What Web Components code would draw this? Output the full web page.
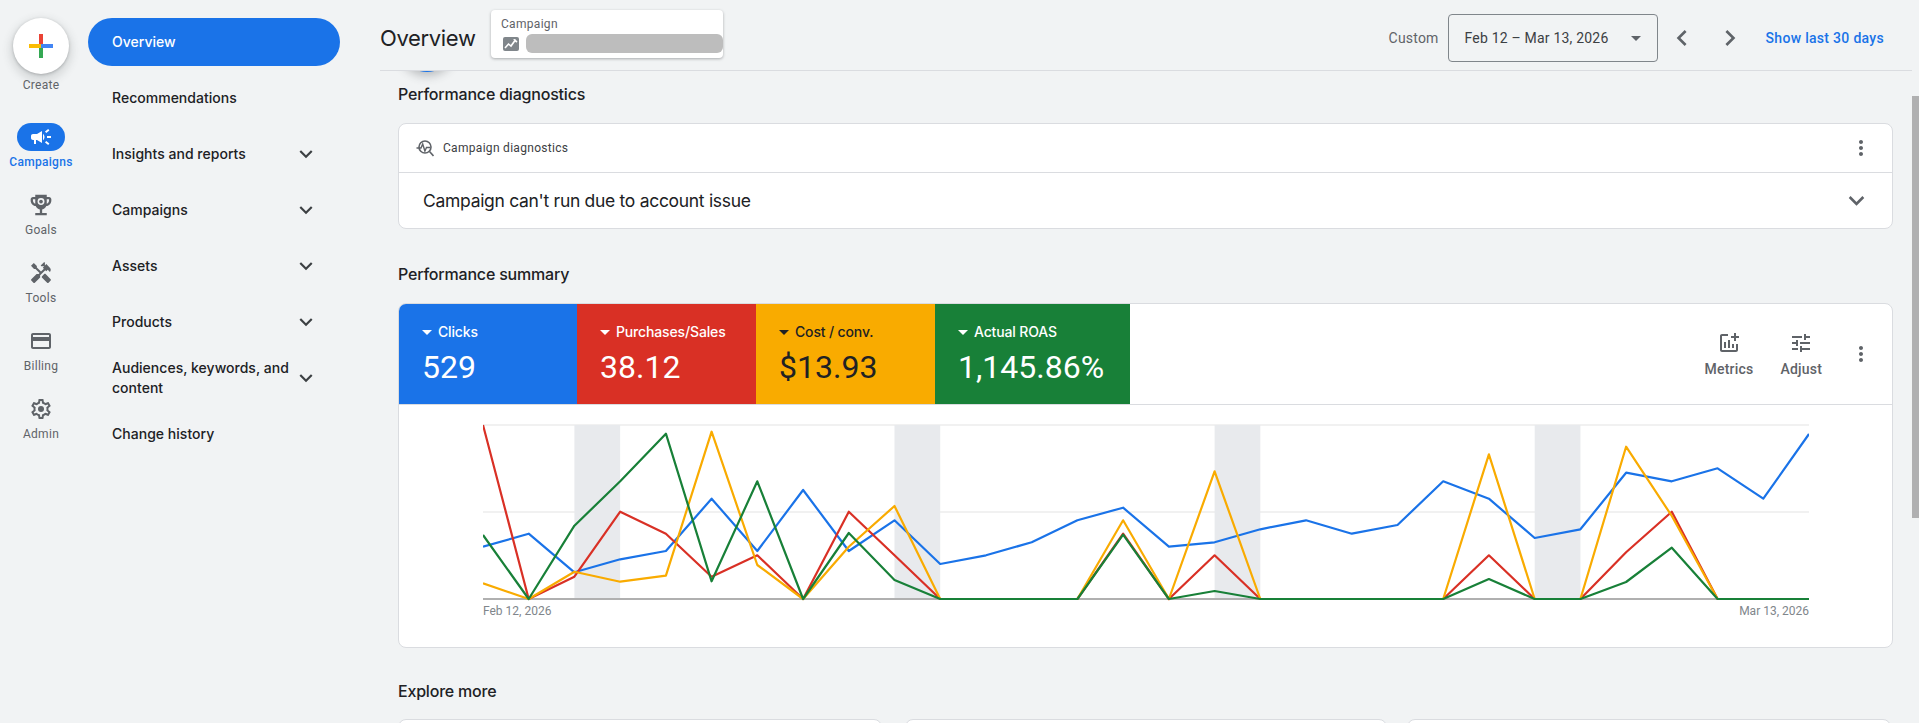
<!DOCTYPE html>
<html lang="en">
<head>
<meta charset="UTF-8">
<title>Overview</title>
<style>
    html, body { margin: 0; height: 100%; overflow: hidden; background: #f1f3f4; }
    body { font-family: Roboto, "Liberation Sans", sans-serif; color: #202124; }
    #app { display: flex; height: 723px; }
</style>
</head>
<body>
<div id="app">
    <ads-rail>
        <create-button></create-button>
        <rail-item icon="campaign" active>Campaigns</rail-item>
        <rail-item icon="goals">Goals</rail-item>
        <rail-item icon="tools">Tools</rail-item>
        <rail-item icon="billing">Billing</rail-item>
        <rail-item icon="admin">Admin</rail-item>
    </ads-rail>
    <ads-nav>
        <nav-item active>Overview</nav-item>
        <nav-item>Recommendations</nav-item>
        <nav-item expand>Insights and reports</nav-item>
        <nav-item expand>Campaigns</nav-item>
        <nav-item expand>Assets</nav-item>
        <nav-item expand>Products</nav-item>
        <nav-item expand>Audiences, keywords, and content</nav-item>
        <nav-item>Change history</nav-item>
    </ads-nav>
    <ads-main>
        <page-header></page-header>
        <page-content>
            <section-title style="margin-top:11px">Performance diagnostics</section-title>
            <diag-card style="margin-top:17px"></diag-card>
            <section-title style="margin-top:33px">Performance summary</section-title>
            <summary-card style="margin-top:17px">
                <metric-tile label="Clicks" value="529" color="#1a73e8" style="width:178px"></metric-tile>
                <metric-tile label="Purchases/Sales" value="38.12" color="#d93025" style="width:179px"></metric-tile>
                <metric-tile label="Cost / conv." value="$13.93" color="#f9ab00" ink="#202124" style="width:179px"></metric-tile>
                <metric-tile label="Actual ROAS" value="1,145.86%" color="#188038" style="width:195px"></metric-tile>
            </summary-card>
            <section-title style="margin-top:31px">Explore more</section-title>
            <more-cards style="margin-top:16px"></more-cards>
        </page-content>
    </ads-main>
    <scroll-thumb></scroll-thumb>
</div>

<script>
    const icons = {
        campaign: '<path d="M18 11v2h4v-2h-4zm-2 6.61c.96.71 2.21 1.65 3.2 2.39.4-.53.8-1.07 1.2-1.6-.99-.74-2.24-1.68-3.2-2.4-.4.54-.8 1.08-1.2 1.61zM20.4 5.6c-.4-.53-.8-1.07-1.2-1.6-.99.74-2.24 1.68-3.2 2.4.4.53.8 1.07 1.2 1.6.96-.72 2.21-1.65 3.2-2.4zM4 9c-1.1 0-2 .9-2 2v2c0 1.1.9 2 2 2h1v4h2v-4h1l5 3V6L8 9H4zm11.5 3c0-1.33-.58-2.53-1.5-3.35v6.69c.92-.81 1.5-2.01 1.5-3.34z"/>',
        goals: '<g transform="translate(12 12) scale(1.15) translate(-12 -12)"><path d="M19 5h-2V3H7v2H5c-1.1 0-2 .9-2 2v1c0 2.55 1.92 4.63 4.39 4.94.63 1.5 1.98 2.63 3.61 2.96V19H7v2h10v-2h-4v-3.1c1.63-.33 2.98-1.46 3.61-2.96C19.08 12.63 21 10.55 21 8V7c0-1.1-.9-2-2-2zM5 8V7h2v3.82C5.84 10.4 5 9.3 5 8zm14 0c0 1.3-.84 2.4-2 2.82V7h2v1z"/><circle cx="12" cy="9" r="3" fill="#f1f3f4"/><circle cx="12" cy="9" r="1.6"/></g>',
        tools: '<path d="M21.67 18.17l-5.3-5.3h-.99l-2.54 2.54v.99l5.3 5.3c.39.39 1.02.39 1.41 0l2.12-2.12c.39-.38.39-1.02 0-1.41z"/><path d="M17.34 10.19l1.41-1.41 2.12 2.12c1.17-1.17 1.17-3.07 0-4.24l-3.54-3.54-1.41 1.41V1.71l-.7-.71-3.54 3.54.71.71h2.83l-1.41 1.41 1.06 1.06-2.89 2.89-4.13-4.13V5.06L4.83 2.04 2 4.87 5.03 7.9h1.41l4.13 4.13-.85.85H7.6l-5.3 5.3c-.39.39-.39 1.02 0 1.41l2.12 2.12c.39.39 1.02.39 1.41 0l5.3-5.3v-2.12l5.15-5.15 1.06 1.05z"/>',
        billing: '<path d="M20 4H4c-1.11 0-1.99.89-1.99 2L2 18c0 1.11.89 2 2 2h16c1.11 0 2-.89 2-2V6c0-1.11-.89-2-2-2zm0 14H4v-6h16v6zm0-10H4V6h16v2z"/>',
        admin: '<path d="M19.43 12.98c.04-.32.07-.64.07-.98 0-.34-.03-.66-.07-.98l2.11-1.65c.19-.15.24-.42.12-.64l-2-3.46c-.09-.16-.26-.25-.44-.25-.06 0-.12.01-.17.03l-2.49 1c-.52-.4-1.08-.73-1.69-.98l-.38-2.65C14.46 2.18 14.25 2 14 2h-4c-.25 0-.46.18-.49.42l-.38 2.65c-.61.25-1.17.59-1.69.98l-2.49-1c-.06-.02-.12-.03-.18-.03-.17 0-.34.09-.43.25l-2 3.46c-.13.22-.07.49.12.64l2.11 1.65c-.04.32-.07.65-.07.98 0 .33.03.66.07.98l-2.11 1.65c-.19.15-.24.42-.12.64l2 3.46c.09.16.26.25.44.25.06 0 .12-.01.17-.03l2.49-1c.52.4 1.08.73 1.69.98l.38 2.65c.03.24.24.42.49.42h4c.25 0 .46-.18.49-.42l.38-2.65c.61-.25 1.17-.59 1.69-.98l2.49 1c.06.02.12.03.18.03.17 0 .34-.09.43-.25l2-3.46c.12-.22.07-.49-.12-.64l-2.11-1.65zm-1.98-1.71c.04.31.05.52.05.73 0 .21-.02.43-.05.73l-.14 1.13.89.7 1.08.84-.7 1.21-1.27-.51-1.04-.42-.9.68c-.43.32-.84.56-1.25.73l-1.06.43-.16 1.13-.2 1.35h-1.4l-.19-1.35-.16-1.13-1.06-.43c-.43-.18-.83-.41-1.23-.71l-.91-.7-1.06.43-1.27.51-.7-1.21 1.08-.84.89-.7-.14-1.13c-.03-.31-.05-.54-.05-.74s.02-.43.05-.73l.14-1.13-.89-.7-1.08-.84.7-1.21 1.27.51 1.04.42.9-.68c.43-.32.84-.56 1.25-.73l1.06-.43.16-1.13.2-1.35h1.39l.19 1.35.16 1.13 1.06.43c.43.18.83.41 1.23.71l.91.7 1.06-.43 1.27-.51.7 1.21-1.07.85-.89.7.14 1.13z"/><circle cx="12" cy="12" r="3"/>',
        expand: '<path d="M16.59 8.59L12 13.17 7.41 8.59 6 10l6 6 6-6z"/>',
        prev: '<path d="M15.41 7.41L14 6l-6 6 6 6 1.41-1.41L10.83 12z"/>',
        next: '<path d="M10 6L8.59 7.41 13.17 12l-4.58 4.59L10 18l6-6z"/>',
        more: '<path d="M12 8c1.1 0 2-.9 2-2s-.9-2-2-2-2 .9-2 2 .9 2 2 2zm0 2c-1.1 0-2 .9-2 2s.9 2 2 2 2-.9 2-2-.9-2-2-2zm0 6c-1.1 0-2 .9-2 2s.9 2 2 2 2-.9 2-2-.9-2-2-2z"/>',
        metrics: '<path d="M22 5v2h-3v3h-2V7h-3V5h3V2h2v3h3zm-3 14H5V5h6V3H5c-1.1 0-2 .9-2 2v14c0 1.1.9 2 2 2h14c1.1 0 2-.9 2-2v-6h-2v6zm-4-6v4h2v-4h-2zm-4 4h2V9h-2v8zm-2 0v-6H7v6h2z"/>',
        adjust: '<path d="M3 17v2h6v-2H3zM3 5v2h10V5H3zm10 16v-2h8v-2h-8v-2h-2v6h2zM7 9v2H3v2h4v2h2V9H7zm14 4v-2H11v2h10zm-6-4h2V7h4V5h-4V3h-2v6z"/>'
    };
    const svg = (name, size = 24, fill = 'currentColor') =>
        `<svg width="${size}" height="${size}" viewBox="0 0 24 24" fill="${fill}" style="display:block;flex:none">${icons[name]}</svg>`;

    const sansHead = 'Inter, Roboto, sans-serif';

    class Base extends HTMLElement {
        connectedCallback() {
            if (this.shadowRoot) return;
            this.attachShadow({ mode: 'open' }).innerHTML = this.render();
        }
    }

    class AdsRail extends Base {
        render() { return `<style>
            :host { display:flex; flex-direction:column; align-items:center; width:82px; flex:none; padding-top:18px; box-sizing:border-box; }
        </style><slot></slot>`; }
    }

    class CreateButton extends Base {
        render() { return `<style>
            :host { display:flex; flex-direction:column; align-items:center; margin-bottom:28px; }
            .fab { width:56px; height:56px; border-radius:50%; background:#fff; box-shadow:0 1px 3px rgba(60,64,67,.3), 0 4px 8px 3px rgba(60,64,67,.15); }
            span { font-size:12px; line-height:20px; letter-spacing:.3px; color:#5f6368; margin-top:1px; }
        </style>
        <div class="fab"><svg width="56" height="56" viewBox="0 0 56 56">
            <rect x="26" y="16" width="4" height="12" fill="#ea4335"/>
            <rect x="26" y="28" width="4" height="12" fill="#34a853"/>
            <rect x="16" y="26" width="12" height="4" fill="#fbbc04"/>
            <rect x="28" y="26" width="12" height="4" fill="#4285f4"/>
        </svg></div>
        <span>Create</span>`; }
    }

    class RailItem extends Base {
        render() {
            const on = this.hasAttribute('active');
            return `<style>
                :host { display:flex; flex-direction:column; align-items:center; margin-bottom:19px; color:${on ? '#1a73e8' : '#5f6368'}; }
                .pill { display:flex; align-items:center; justify-content:center; width:48px; height:28px; border-radius:14px;
                    background:${on ? '#1a73e8' : 'transparent'}; color:${on ? '#fff' : '#5f6368'}; }
                .label { font-size:12px; line-height:20px; padding-top:1px; letter-spacing:.3px; font-weight:${on ? 500 : 400}; }
            </style><div class="pill">${svg(this.getAttribute('icon'))}</div><div class="label"><slot></slot></div>`;
        }
    }

    class AdsNav extends Base {
        render() { return `<style>
            :host { display:block; width:298px; flex:none; padding:14px 40px 0 6px; box-sizing:border-box; }
        </style><slot></slot>`; }
    }

    class NavItem extends Base {
        render() {
            const on = this.hasAttribute('active');
            return `<style>
                :host { display:flex; align-items:center; min-height:56px; }
                .row { flex:1; display:flex; align-items:center; box-sizing:border-box; height:48px; padding:0 21px 0 24px; border-radius:24px;
                    background:${on ? '#1a73e8' : 'transparent'}; color:${on ? '#fff' : '#202124'};
                    font:450 14px/20px ${sansHead}; letter-spacing:.02px; }
                .text { flex:1; }
                svg { color:#3c4043; margin-left:4px; }
            </style><div class="row"><div class="text"><slot></slot></div>${this.hasAttribute('expand') ? svg('expand', 26) : ''}</div>`;
        }
    }

    class AdsMain extends Base {
        render() { return `<style>
            :host { display:flex; flex-direction:column; flex:none; width:1532px; height:723px; overflow:hidden; }
        </style><slot></slot>`; }
    }

    class PageHeader extends Base {
        render() { return `<style>
            :host { display:flex; align-items:center; flex:none; height:64px; padding:6px 28px 0 0; border-bottom:1px solid #dadce0; position:relative; z-index:1; }
            h1 { margin:0; font:400 22px/28px ${sansHead}; color:#202124; letter-spacing:-.35px; width:111px; flex:none; }
            .right { margin-left:auto; display:flex; align-items:center; font-size:14px; color:#5f6368; }
            .custom { letter-spacing:.2px; margin-right:9px; }
            .range { display:flex; align-items:center; box-sizing:border-box; width:210px; height:48px; border:1px solid #80868b; border-radius:4px; padding:0 16px; color:#3c4043; letter-spacing:.2px; }
            .range i { margin-left:auto; border:5px solid transparent; border-top:5px solid #5f6368; border-bottom:0; }
            .arrow { width:48px; display:flex; justify-content:center; color:#5f6368; }
            .show { color:#1a73e8; font-weight:500; letter-spacing:.3px; margin-left:12px; white-space:nowrap; }
        </style>
        <h1>Overview</h1>
        <campaign-chip></campaign-chip>
        <div class="right">
            <span class="custom">Custom</span>
            <div class="range"><span>Feb 12 – Mar 13, 2026</span><i></i></div>
            <div class="arrow">${svg('prev', 32)}</div>
            <div class="arrow">${svg('next', 32)}</div>
            <span class="show">Show last 30 days</span>
        </div>`; }
    }

    class CampaignChip extends Base {
        render() { return `<style>
            :host { display:flex; flex-direction:column; align-self:flex-start; box-sizing:border-box; width:232px; height:48px; background:#fff; border-radius:4px;
                box-shadow:0 1px 3px rgba(60,64,67,.4); padding:6px 0 0 10px; margin-top:4px; }
            .t { font-size:12px; line-height:16px; letter-spacing:.3px; color:#5f6368; }
            .r { display:flex; align-items:center; margin-top:2px; }
            .ic { width:16px; height:14px; border-radius:2px; background:#80868b; margin-left:2px; }
            .ic svg { display:block; }
            .blur { margin-left:7px; width:197px; height:19px; background:#bdbdbd; border-radius:6px; }
        </style>
        <div class="t">Campaign</div>
        <div class="r">
            <div class="ic"><svg width="16" height="14" viewBox="0 0 16 14" fill="none" stroke="#fff" stroke-width="1.6"><path d="M2 11l3.5-4 2.5 2 4-5.5 2 1.5"/><path d="M10.5 2.6h2" stroke-width="1"/></svg></div>
            <div class="blur"></div>
        </div>`; }
    }

    class PageContent extends Base {
        render() { return `<style>
            :host { display:block; position:relative; flex:1; overflow:hidden; padding:0 19px 0 18px; }
            .peek { position:absolute; left:19px; top:-55px; width:56px; height:56px; border-radius:50%; background:#1a73e8; box-shadow:0 2px 10px 2px rgba(60,64,67,.3); }
        </style><div class="peek"></div><slot></slot>`; }
    }

    class SectionTitle extends Base {
        render() { return `<style>
            :host { display:block; font:500 16px/24px ${sansHead}; letter-spacing:-.2px; color:#202124; }
        </style><slot></slot>`; }
    }

    class DiagCard extends Base {
        render() { return `<style>
            :host { display:block; background:#fff; border:1px solid #dadce0; border-radius:8px; }
            .top { display:flex; align-items:center; height:48px; border-bottom:1px solid #dadce0; padding:0 19px 0 17px; font-size:12px; letter-spacing:.3px; color:#3c4043; }
            .top span { margin-left:9px; }
            .top .dots { margin-left:auto; color:#5f6368; }
            .bot { display:flex; align-items:center; height:55px; padding:0 20px 0 24px; font:400 17.5px/24px ${sansHead}; letter-spacing:-.3px; color:#202124; }
            .bot svg { margin-left:auto; color:#5f6368; }
        </style>
        <div class="top">
            <svg width="18" height="20" viewBox="0 0 18 20" fill="none" stroke="#5f6368" stroke-width="1.6" style="flex:none">
                <circle cx="9" cy="9" r="6"/><path d="M13.5 13.5l4 4.5"/><path d="M0.5 10h4.5l1.7-4 2.2 7 1.6-3.5H14" stroke-width="1.4"/>
            </svg>
            <span>Campaign diagnostics</span>
            <div class="dots">${svg('more')}</div>
        </div>
        <div class="bot">Campaign can't run due to account issue${svg('expand', 31)}</div>`; }
    }

    class SummaryCard extends Base {
        render() { return `<style>
            :host { display:block; background:#fff; border:1px solid #dadce0; border-radius:8px; overflow:hidden; }
            .top { display:flex; height:100px; border-bottom:1px solid #dadce0; }
            .tools { margin-left:auto; display:flex; align-items:center; padding-right:19px; color:#5f6368; }
            .tool { display:flex; flex-direction:column; align-items:center; font:500 14px/20px Roboto, sans-serif; letter-spacing:.2px; margin-right:27px; padding-top:2px; }
            .tool svg { margin-bottom:4px; }
        </style>
        <div class="top">
            <slot></slot>
            <div class="tools">
                <div class="tool">${svg('metrics')}Metrics</div>
                <div class="tool">${svg('adjust')}Adjust</div>
                ${svg('more')}
            </div>
        </div>
        <perf-chart></perf-chart>`; }
    }

    class MetricTile extends Base {
        render() {
            const ink = this.getAttribute('ink') || '#fff';
            return `<style>
                :host { display:block; flex:none; box-sizing:border-box; background:${this.getAttribute('color')}; color:${ink}; padding:18px 0 0 24px; }
                .l { display:flex; align-items:center; font:500 14px/20px ${sansHead}; letter-spacing:-.15px; white-space:nowrap; }
                i { border:5px solid transparent; border-top:5px solid ${ink}; border-bottom:0; margin:0 6px 0 -1px; }
                .v { font:400 32px/40px Roboto, sans-serif; margin-top:5px; margin-left:-1px; white-space:nowrap; }
            </style><div class="l"><i></i>${this.getAttribute('label')}</div><div class="v">${this.getAttribute('value')}</div>`;
        }
    }

    // values are read off the reference: 45 is the top gridline, 567 the baseline
    const series = [
        ['#1a73e8', [410,371,487,448,423,266,423,240,423,331,462,436,397,331,293,410,397,358,331,371,345,214,266,384,358,188,214,175,266,72]],
        ['#d93025', [45,567,500,305,371,500,436,567,305,436,567,567,567,567,371,567,436,567,567,567,567,567,436,567,567,427,305,567,567,567]],
        ['#f9ab00', [520,567,485,515,497,65,465,567,410,288,567,567,567,567,331,567,184,567,567,567,567,567,133,567,567,110,318,567,567,567]],
        ['#188038', [375,567,347,214,71,514,214,567,369,510,567,567,567,567,374,567,543,567,567,567,567,567,507,567,567,516,413,567,567,567]]
    ];

    class PerfChart extends Base {
        render() {
            const step = 1326 / 29;
            const x = i => +(i * step).toFixed(1);
            const y = v => +(v / 3 - 11).toFixed(1);
            const bands = [2, 9, 16, 23].map(i => `<rect x="${x(i)}" y="4" width="${step}" height="174" fill="#e8eaed"/>`).join('');
            const lines = series.map(([c, vals]) =>
                `<polyline fill="none" stroke="${c}" stroke-width="2.2" stroke-linejoin="round" points="${vals.map((v, i) => x(i) + ',' + y(v)).join(' ')}"/>`).join('');
            return `<style>
                :host { display:block; padding:16px 0 28px 84px; }
                svg { display:block; }
                .dates { display:flex; justify-content:space-between; width:1326px; font-size:12px; line-height:16px; color:#80868b; }
            </style>
            <svg width="1326" height="182" viewBox="0 0 1326 182">
                <path d="M0 4H1326M0 91H1326" stroke="#f1f1f1" stroke-width="2"/>
                ${bands}
                <path d="M0 178H1326" stroke="#b0b0b0" stroke-width="2"/>
                ${lines}
            </svg>
            <div class="dates"><span>Feb 12, 2026</span><span>Mar 13, 2026</span></div>`;
        }
    }

    class MoreCards extends Base {
        render() { return `<style>
            :host { display:flex; }
            div { width:484px; height:80px; background:#fff; border:1px solid #dadce0; border-radius:8px; box-sizing:border-box; flex:none; }
            div + div { width:482px; margin-left:23px; }
            div + div + div { width:484px; margin-left:20px; }
        </style><div></div><div></div><div></div>`; }
    }

    class ScrollThumb extends Base {
        render() { return `<style>
            :host { display:block; flex:1; }
            div { height:422px; margin-top:96px; background:#b0b0b1; }
        </style><div></div>`; }
    }

    customElements.define('ads-rail', AdsRail);
    customElements.define('create-button', CreateButton);
    customElements.define('rail-item', RailItem);
    customElements.define('ads-nav', AdsNav);
    customElements.define('nav-item', NavItem);
    customElements.define('ads-main', AdsMain);
    customElements.define('page-header', PageHeader);
    customElements.define('campaign-chip', CampaignChip);
    customElements.define('page-content', PageContent);
    customElements.define('section-title', SectionTitle);
    customElements.define('diag-card', DiagCard);
    customElements.define('summary-card', SummaryCard);
    customElements.define('metric-tile', MetricTile);
    customElements.define('perf-chart', PerfChart);
    customElements.define('more-cards', MoreCards);
    customElements.define('scroll-thumb', ScrollThumb);
</script>
</body>
</html>
